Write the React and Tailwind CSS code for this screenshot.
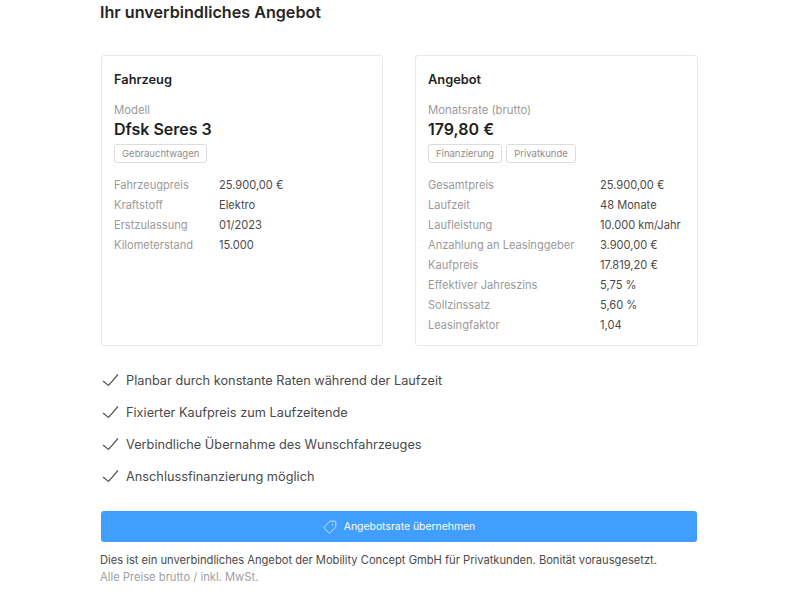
import { Tag } from 'lucide-react';

const vehicleRows = [
    ['Fahrzeugpreis', '25.900,00 €'],
    ['Kraftstoff', 'Elektro'],
    ['Erstzulassung', '01/2023'],
    ['Kilometerstand', '15.000'],
];

const offerRows = [
    ['Gesamtpreis', '25.900,00 €'],
    ['Laufzeit', '48 Monate'],
    ['Laufleistung', '10.000 km/Jahr'],
    ['Anzahlung an Leasinggeber', '3.900,00 €'],
    ['Kaufpreis', '17.819,20 €'],
    ['Effektiver Jahreszins', '5,75 %'],
    ['Sollzinssatz', '5,60 %'],
    ['Leasingfaktor', '1,04'],
];

const benefits = [
    'Planbar durch konstante Raten während der Laufzeit',
    'Fixierter Kaufpreis zum Laufzeitende',
    'Verbindliche Übernahme des Wunschfahrzeuges',
    'Anschlussfinanzierung möglich',
];

const CheckMark = () => (
    <svg width="20" height="20" viewBox="0 0 20 20" fill="none" stroke="#555" strokeWidth="1.2" className="shrink-0">
        <path d="M2 10 7.5 14.5 17 3.5" />
    </svg>
);

const Badge = ({ children }) => (
    <span className="h-[19px] px-[7px] flex items-center border border-[#dcdcdc] rounded-[3px] text-[9.5px] leading-none text-[#8c8c8c]">
        {children}
    </span>
);

const Card = ({ title, label, value, badges, rows, labelWidth }) => (
    <div className="h-[291px] border border-[#e8e8e8] rounded-[3px] pt-[15px] px-[12px]">
        <h3 className="text-[12.8px] leading-[18px] font-semibold text-[#1f1f1f]">{title}</h3>
        <p className="mt-[13px] text-[11.3px] leading-[16px] text-[#9a9a9a]">{label}</p>
        <p className="text-base leading-[22px] font-semibold text-[#1f1f1f]">{value}</p>
        <div className="mt-[4px] flex gap-[4px]">
            {badges.map(b => <Badge key={b}>{b}</Badge>)}
        </div>
        <div className={`mt-[12px] grid ${labelWidth}`}>
            {rows.map(([k, v]) => (
                <div key={k} className="contents text-[11.1px] leading-[20px]">
                    <span className="text-[#9a9a9a]">{k}</span>
                    <span className="text-[#4a4a4a]">{v}</span>
                </div>
            ))}
        </div>
    </div>
);

const App = () => {
    return (
        <div className="h-[600px] overflow-hidden bg-white pl-[101px] pr-[102px] font-['Inter',sans-serif]">
            <h2 className="-ml-px pt-[1px] text-[16.15px] leading-[22px] font-semibold text-[#262626]">Ihr unverbindliches Angebot</h2>

            <div className="mt-[32px] grid grid-cols-[282px_283px] gap-[32px]">
                <Card
                    title="Fahrzeug"
                    label="Modell"
                    value="Dfsk Seres 3"
                    badges={['Gebrauchtwagen']}
                    rows={vehicleRows}
                    labelWidth="grid-cols-[105px_1fr]"
                />
                <Card
                    title="Angebot"
                    label="Monatsrate (brutto)"
                    value="179,80 €"
                    badges={['Finanzierung', 'Privatkunde']}
                    rows={offerRows}
                    labelWidth="grid-cols-[172px_1fr]"
                />
            </div>

            <ul className="mt-[25px] flex flex-col gap-[12px]">
                {benefits.map(b => (
                    <li key={b} className="flex items-center gap-[5px] h-[20px] text-[12.75px] text-[#4a4a4a]">
                        <CheckMark />
                        <span>{b}</span>
                    </li>
                ))}
            </ul>

            <button className="mt-[24px] w-[596px] h-[31px] flex items-center justify-center gap-[7px] bg-[#409eff] rounded-[3px] text-white text-[10.4px]">
                <Tag size={14} strokeWidth={1.25} className="rotate-90" />
                Angebotsrate übernehmen
            </button>

            <p className="-ml-px mt-[9px] text-[11.2px] tracking-[-0.02px] leading-[18px] text-[#4a4a4a]">
                Dies ist ein unverbindliches Angebot der Mobility Concept GmbH für Privatkunden. Bonität vorausgesetzt.
            </p>
            <p className="-ml-px text-[11.2px] leading-[16px] text-[#a0a0a0]">Alle Preise brutto / inkl. MwSt.</p>
        </div>
    );
};

export default App;
